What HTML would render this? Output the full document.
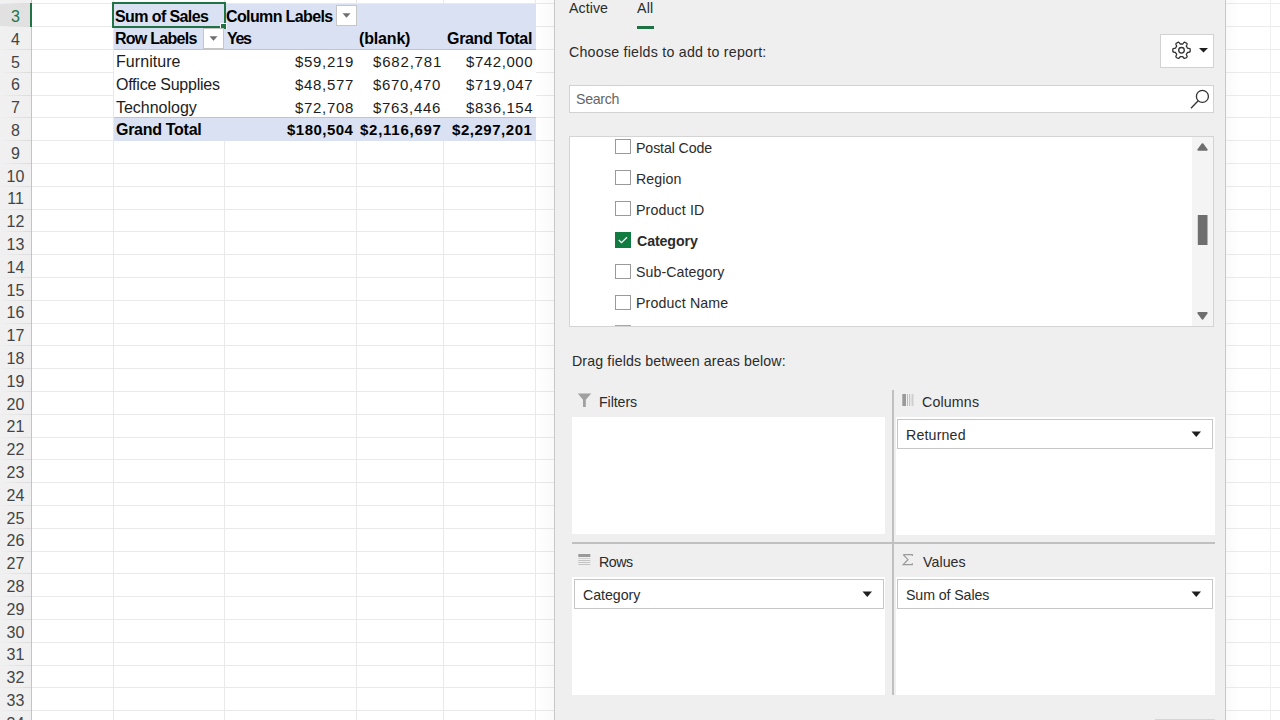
<!DOCTYPE html>
<html><head><meta charset="utf-8"><style>
html,body{margin:0;padding:0;width:1280px;height:720px;overflow:hidden;background:#fff;position:relative;font-family:"Liberation Sans", sans-serif}
.t{position:absolute;white-space:nowrap;line-height:normal}
.r{position:absolute}
</style></head><body>
<div class="r" style="left:0px;top:0px;width:31px;height:720px;background:#f0f0f0"></div>
<div class="r" style="left:0px;top:4px;width:31px;height:22px;background:#e1e1e1"></div>
<div class="r" style="left:0px;top:3px;width:31px;height:1px;background:linear-gradient(to right, rgba(0,0,0,0.0), rgba(0,0,0,0.09))"></div>
<div class="r" style="left:32px;top:3px;width:522px;height:1px;background:#e9e9e9"></div>
<div class="r" style="left:1226px;top:3px;width:54px;height:1px;background:#ececec"></div>
<div class="r" style="left:0px;top:26px;width:31px;height:1px;background:linear-gradient(to right, rgba(0,0,0,0.0), rgba(0,0,0,0.09))"></div>
<div class="r" style="left:32px;top:26px;width:522px;height:1px;background:#e9e9e9"></div>
<div class="r" style="left:1226px;top:26px;width:54px;height:1px;background:#ececec"></div>
<div class="r" style="left:0px;top:49px;width:31px;height:1px;background:linear-gradient(to right, rgba(0,0,0,0.0), rgba(0,0,0,0.09))"></div>
<div class="r" style="left:32px;top:49px;width:522px;height:1px;background:#e9e9e9"></div>
<div class="r" style="left:1226px;top:49px;width:54px;height:1px;background:#ececec"></div>
<div class="r" style="left:0px;top:72px;width:31px;height:1px;background:linear-gradient(to right, rgba(0,0,0,0.0), rgba(0,0,0,0.09))"></div>
<div class="r" style="left:32px;top:72px;width:522px;height:1px;background:#e9e9e9"></div>
<div class="r" style="left:1226px;top:72px;width:54px;height:1px;background:#ececec"></div>
<div class="r" style="left:0px;top:95px;width:31px;height:1px;background:linear-gradient(to right, rgba(0,0,0,0.0), rgba(0,0,0,0.09))"></div>
<div class="r" style="left:32px;top:95px;width:522px;height:1px;background:#e9e9e9"></div>
<div class="r" style="left:1226px;top:95px;width:54px;height:1px;background:#ececec"></div>
<div class="r" style="left:0px;top:117px;width:31px;height:1px;background:linear-gradient(to right, rgba(0,0,0,0.0), rgba(0,0,0,0.09))"></div>
<div class="r" style="left:32px;top:117px;width:522px;height:1px;background:#e9e9e9"></div>
<div class="r" style="left:1226px;top:117px;width:54px;height:1px;background:#ececec"></div>
<div class="r" style="left:0px;top:140px;width:31px;height:1px;background:linear-gradient(to right, rgba(0,0,0,0.0), rgba(0,0,0,0.09))"></div>
<div class="r" style="left:32px;top:140px;width:522px;height:1px;background:#e9e9e9"></div>
<div class="r" style="left:1226px;top:140px;width:54px;height:1px;background:#ececec"></div>
<div class="r" style="left:0px;top:163px;width:31px;height:1px;background:linear-gradient(to right, rgba(0,0,0,0.0), rgba(0,0,0,0.09))"></div>
<div class="r" style="left:32px;top:163px;width:522px;height:1px;background:#e9e9e9"></div>
<div class="r" style="left:1226px;top:163px;width:54px;height:1px;background:#ececec"></div>
<div class="r" style="left:0px;top:186px;width:31px;height:1px;background:linear-gradient(to right, rgba(0,0,0,0.0), rgba(0,0,0,0.09))"></div>
<div class="r" style="left:32px;top:186px;width:522px;height:1px;background:#e9e9e9"></div>
<div class="r" style="left:1226px;top:186px;width:54px;height:1px;background:#ececec"></div>
<div class="r" style="left:0px;top:209px;width:31px;height:1px;background:linear-gradient(to right, rgba(0,0,0,0.0), rgba(0,0,0,0.09))"></div>
<div class="r" style="left:32px;top:209px;width:522px;height:1px;background:#e9e9e9"></div>
<div class="r" style="left:1226px;top:209px;width:54px;height:1px;background:#ececec"></div>
<div class="r" style="left:0px;top:231px;width:31px;height:1px;background:linear-gradient(to right, rgba(0,0,0,0.0), rgba(0,0,0,0.09))"></div>
<div class="r" style="left:32px;top:231px;width:522px;height:1px;background:#e9e9e9"></div>
<div class="r" style="left:1226px;top:231px;width:54px;height:1px;background:#ececec"></div>
<div class="r" style="left:0px;top:254px;width:31px;height:1px;background:linear-gradient(to right, rgba(0,0,0,0.0), rgba(0,0,0,0.09))"></div>
<div class="r" style="left:32px;top:254px;width:522px;height:1px;background:#e9e9e9"></div>
<div class="r" style="left:1226px;top:254px;width:54px;height:1px;background:#ececec"></div>
<div class="r" style="left:0px;top:277px;width:31px;height:1px;background:linear-gradient(to right, rgba(0,0,0,0.0), rgba(0,0,0,0.09))"></div>
<div class="r" style="left:32px;top:277px;width:522px;height:1px;background:#e9e9e9"></div>
<div class="r" style="left:1226px;top:277px;width:54px;height:1px;background:#ececec"></div>
<div class="r" style="left:0px;top:300px;width:31px;height:1px;background:linear-gradient(to right, rgba(0,0,0,0.0), rgba(0,0,0,0.09))"></div>
<div class="r" style="left:32px;top:300px;width:522px;height:1px;background:#e9e9e9"></div>
<div class="r" style="left:1226px;top:300px;width:54px;height:1px;background:#ececec"></div>
<div class="r" style="left:0px;top:323px;width:31px;height:1px;background:linear-gradient(to right, rgba(0,0,0,0.0), rgba(0,0,0,0.09))"></div>
<div class="r" style="left:32px;top:323px;width:522px;height:1px;background:#e9e9e9"></div>
<div class="r" style="left:1226px;top:323px;width:54px;height:1px;background:#ececec"></div>
<div class="r" style="left:0px;top:345px;width:31px;height:1px;background:linear-gradient(to right, rgba(0,0,0,0.0), rgba(0,0,0,0.09))"></div>
<div class="r" style="left:32px;top:345px;width:522px;height:1px;background:#e9e9e9"></div>
<div class="r" style="left:1226px;top:345px;width:54px;height:1px;background:#ececec"></div>
<div class="r" style="left:0px;top:368px;width:31px;height:1px;background:linear-gradient(to right, rgba(0,0,0,0.0), rgba(0,0,0,0.09))"></div>
<div class="r" style="left:32px;top:368px;width:522px;height:1px;background:#e9e9e9"></div>
<div class="r" style="left:1226px;top:368px;width:54px;height:1px;background:#ececec"></div>
<div class="r" style="left:0px;top:391px;width:31px;height:1px;background:linear-gradient(to right, rgba(0,0,0,0.0), rgba(0,0,0,0.09))"></div>
<div class="r" style="left:32px;top:391px;width:522px;height:1px;background:#e9e9e9"></div>
<div class="r" style="left:1226px;top:391px;width:54px;height:1px;background:#ececec"></div>
<div class="r" style="left:0px;top:414px;width:31px;height:1px;background:linear-gradient(to right, rgba(0,0,0,0.0), rgba(0,0,0,0.09))"></div>
<div class="r" style="left:32px;top:414px;width:522px;height:1px;background:#e9e9e9"></div>
<div class="r" style="left:1226px;top:414px;width:54px;height:1px;background:#ececec"></div>
<div class="r" style="left:0px;top:437px;width:31px;height:1px;background:linear-gradient(to right, rgba(0,0,0,0.0), rgba(0,0,0,0.09))"></div>
<div class="r" style="left:32px;top:437px;width:522px;height:1px;background:#e9e9e9"></div>
<div class="r" style="left:1226px;top:437px;width:54px;height:1px;background:#ececec"></div>
<div class="r" style="left:0px;top:459px;width:31px;height:1px;background:linear-gradient(to right, rgba(0,0,0,0.0), rgba(0,0,0,0.09))"></div>
<div class="r" style="left:32px;top:459px;width:522px;height:1px;background:#e9e9e9"></div>
<div class="r" style="left:1226px;top:459px;width:54px;height:1px;background:#ececec"></div>
<div class="r" style="left:0px;top:482px;width:31px;height:1px;background:linear-gradient(to right, rgba(0,0,0,0.0), rgba(0,0,0,0.09))"></div>
<div class="r" style="left:32px;top:482px;width:522px;height:1px;background:#e9e9e9"></div>
<div class="r" style="left:1226px;top:482px;width:54px;height:1px;background:#ececec"></div>
<div class="r" style="left:0px;top:505px;width:31px;height:1px;background:linear-gradient(to right, rgba(0,0,0,0.0), rgba(0,0,0,0.09))"></div>
<div class="r" style="left:32px;top:505px;width:522px;height:1px;background:#e9e9e9"></div>
<div class="r" style="left:1226px;top:505px;width:54px;height:1px;background:#ececec"></div>
<div class="r" style="left:0px;top:528px;width:31px;height:1px;background:linear-gradient(to right, rgba(0,0,0,0.0), rgba(0,0,0,0.09))"></div>
<div class="r" style="left:32px;top:528px;width:522px;height:1px;background:#e9e9e9"></div>
<div class="r" style="left:1226px;top:528px;width:54px;height:1px;background:#ececec"></div>
<div class="r" style="left:0px;top:551px;width:31px;height:1px;background:linear-gradient(to right, rgba(0,0,0,0.0), rgba(0,0,0,0.09))"></div>
<div class="r" style="left:32px;top:551px;width:522px;height:1px;background:#e9e9e9"></div>
<div class="r" style="left:1226px;top:551px;width:54px;height:1px;background:#ececec"></div>
<div class="r" style="left:0px;top:573px;width:31px;height:1px;background:linear-gradient(to right, rgba(0,0,0,0.0), rgba(0,0,0,0.09))"></div>
<div class="r" style="left:32px;top:573px;width:522px;height:1px;background:#e9e9e9"></div>
<div class="r" style="left:1226px;top:573px;width:54px;height:1px;background:#ececec"></div>
<div class="r" style="left:0px;top:596px;width:31px;height:1px;background:linear-gradient(to right, rgba(0,0,0,0.0), rgba(0,0,0,0.09))"></div>
<div class="r" style="left:32px;top:596px;width:522px;height:1px;background:#e9e9e9"></div>
<div class="r" style="left:1226px;top:596px;width:54px;height:1px;background:#ececec"></div>
<div class="r" style="left:0px;top:619px;width:31px;height:1px;background:linear-gradient(to right, rgba(0,0,0,0.0), rgba(0,0,0,0.09))"></div>
<div class="r" style="left:32px;top:619px;width:522px;height:1px;background:#e9e9e9"></div>
<div class="r" style="left:1226px;top:619px;width:54px;height:1px;background:#ececec"></div>
<div class="r" style="left:0px;top:642px;width:31px;height:1px;background:linear-gradient(to right, rgba(0,0,0,0.0), rgba(0,0,0,0.09))"></div>
<div class="r" style="left:32px;top:642px;width:522px;height:1px;background:#e9e9e9"></div>
<div class="r" style="left:1226px;top:642px;width:54px;height:1px;background:#ececec"></div>
<div class="r" style="left:0px;top:665px;width:31px;height:1px;background:linear-gradient(to right, rgba(0,0,0,0.0), rgba(0,0,0,0.09))"></div>
<div class="r" style="left:32px;top:665px;width:522px;height:1px;background:#e9e9e9"></div>
<div class="r" style="left:1226px;top:665px;width:54px;height:1px;background:#ececec"></div>
<div class="r" style="left:0px;top:687px;width:31px;height:1px;background:linear-gradient(to right, rgba(0,0,0,0.0), rgba(0,0,0,0.09))"></div>
<div class="r" style="left:32px;top:687px;width:522px;height:1px;background:#e9e9e9"></div>
<div class="r" style="left:1226px;top:687px;width:54px;height:1px;background:#ececec"></div>
<div class="r" style="left:0px;top:710px;width:31px;height:1px;background:linear-gradient(to right, rgba(0,0,0,0.0), rgba(0,0,0,0.09))"></div>
<div class="r" style="left:32px;top:710px;width:522px;height:1px;background:#e9e9e9"></div>
<div class="r" style="left:1226px;top:710px;width:54px;height:1px;background:#ececec"></div>
<div class="r" style="left:113px;top:0px;width:1px;height:720px;background:#e9e9e9"></div>
<div class="r" style="left:224px;top:0px;width:1px;height:720px;background:#e9e9e9"></div>
<div class="r" style="left:356px;top:0px;width:1px;height:720px;background:#e9e9e9"></div>
<div class="r" style="left:443px;top:0px;width:1px;height:720px;background:#e9e9e9"></div>
<div class="r" style="left:535px;top:0px;width:1px;height:720px;background:#e9e9e9"></div>
<div class="r" style="left:1270px;top:0px;width:1px;height:720px;background:#f0f0f0"></div>
<div class="r" style="left:31px;top:0px;width:1px;height:720px;background:#c4c4c4"></div>
<div class="r" style="left:30px;top:3px;width:2px;height:24px;background:#217346"></div>
<div class="t" style="left:0;width:31px;text-align:center;top:8px;font-size:16px;color:#217346">3</div>
<div class="t" style="left:0;width:31px;text-align:center;top:31px;font-size:16px;color:#444">4</div>
<div class="t" style="left:0;width:31px;text-align:center;top:54px;font-size:16px;color:#444">5</div>
<div class="t" style="left:0;width:31px;text-align:center;top:76px;font-size:16px;color:#444">6</div>
<div class="t" style="left:0;width:31px;text-align:center;top:99px;font-size:16px;color:#444">7</div>
<div class="t" style="left:0;width:31px;text-align:center;top:122px;font-size:16px;color:#444">8</div>
<div class="t" style="left:0;width:31px;text-align:center;top:145px;font-size:16px;color:#444">9</div>
<div class="t" style="left:0;width:31px;text-align:center;top:168px;font-size:16px;color:#444">10</div>
<div class="t" style="left:0;width:31px;text-align:center;top:190px;font-size:16px;color:#444">11</div>
<div class="t" style="left:0;width:31px;text-align:center;top:213px;font-size:16px;color:#444">12</div>
<div class="t" style="left:0;width:31px;text-align:center;top:236px;font-size:16px;color:#444">13</div>
<div class="t" style="left:0;width:31px;text-align:center;top:259px;font-size:16px;color:#444">14</div>
<div class="t" style="left:0;width:31px;text-align:center;top:282px;font-size:16px;color:#444">15</div>
<div class="t" style="left:0;width:31px;text-align:center;top:304px;font-size:16px;color:#444">16</div>
<div class="t" style="left:0;width:31px;text-align:center;top:327px;font-size:16px;color:#444">17</div>
<div class="t" style="left:0;width:31px;text-align:center;top:350px;font-size:16px;color:#444">18</div>
<div class="t" style="left:0;width:31px;text-align:center;top:373px;font-size:16px;color:#444">19</div>
<div class="t" style="left:0;width:31px;text-align:center;top:396px;font-size:16px;color:#444">20</div>
<div class="t" style="left:0;width:31px;text-align:center;top:418px;font-size:16px;color:#444">21</div>
<div class="t" style="left:0;width:31px;text-align:center;top:441px;font-size:16px;color:#444">22</div>
<div class="t" style="left:0;width:31px;text-align:center;top:464px;font-size:16px;color:#444">23</div>
<div class="t" style="left:0;width:31px;text-align:center;top:487px;font-size:16px;color:#444">24</div>
<div class="t" style="left:0;width:31px;text-align:center;top:510px;font-size:16px;color:#444">25</div>
<div class="t" style="left:0;width:31px;text-align:center;top:532px;font-size:16px;color:#444">26</div>
<div class="t" style="left:0;width:31px;text-align:center;top:555px;font-size:16px;color:#444">27</div>
<div class="t" style="left:0;width:31px;text-align:center;top:578px;font-size:16px;color:#444">28</div>
<div class="t" style="left:0;width:31px;text-align:center;top:601px;font-size:16px;color:#444">29</div>
<div class="t" style="left:0;width:31px;text-align:center;top:624px;font-size:16px;color:#444">30</div>
<div class="t" style="left:0;width:31px;text-align:center;top:646px;font-size:16px;color:#444">31</div>
<div class="t" style="left:0;width:31px;text-align:center;top:669px;font-size:16px;color:#444">32</div>
<div class="t" style="left:0;width:31px;text-align:center;top:692px;font-size:16px;color:#444">33</div>
<div class="t" style="left:0;width:31px;text-align:center;top:715px;font-size:16px;color:#444">34</div>
<div class="r" style="left:114px;top:4px;width:422px;height:45px;background:#d9e1f2"></div>
<div class="r" style="left:114px;top:49px;width:422px;height:1px;background:#b4c6e7"></div>
<div class="r" style="left:114px;top:50px;width:422px;height:67px;background:#fff"></div>
<div class="r" style="left:114px;top:117px;width:422px;height:1px;background:#b4c6e7"></div>
<div class="r" style="left:114px;top:118px;width:422px;height:23px;background:#d9e1f2"></div>
<div id="c_sum" class="t" style="left:115.00px;top:8px;font-size:16px;font-weight:700;color:#000;letter-spacing:-0.600px">Sum of Sales</div>
<div id="c_collab" class="t" style="left:226.00px;top:8px;font-size:16px;font-weight:700;color:#000;letter-spacing:-0.625px">Column Labels</div>
<div id="c_rowlab" class="t" style="left:115.00px;top:30px;font-size:16px;font-weight:700;color:#000;letter-spacing:-0.733px">Row Labels</div>
<div id="c_yes" class="t" style="left:227.00px;top:30px;font-size:16px;font-weight:700;color:#000;letter-spacing:-1.300px">Yes</div>
<div id="c_blank" class="t" style="left:359.00px;top:30px;font-size:16px;font-weight:700;color:#000;letter-spacing:-0.167px">(blank)</div>
<div id="c_gt4" class="t" style="left:447.00px;top:30px;font-size:16px;font-weight:700;color:#000;letter-spacing:-0.320px">Grand Total</div>
<div id="c_furn" class="t" style="left:116.00px;top:53px;font-size:16px;font-weight:400;color:#1c1c1c;letter-spacing:0.062px">Furniture</div>
<div id="c_off" class="t" style="left:116.00px;top:76px;font-size:16px;font-weight:400;color:#1c1c1c;letter-spacing:-0.243px">Office Supplies</div>
<div id="c_tech" class="t" style="left:116.00px;top:99px;font-size:16px;font-weight:400;color:#1c1c1c;letter-spacing:-0.017px">Technology</div>
<div id="c_gt8" class="t" style="left:116.00px;top:121px;font-size:16px;font-weight:700;color:#000;letter-spacing:-0.290px">Grand Total</div>
<div id="n11" class="t" style="left:295.00px;top:53px;font-size:15px;font-weight:400;color:#1c1c1c;letter-spacing:0.683px">$59,219</div>
<div id="n12" class="t" style="left:373.00px;top:53px;font-size:15px;font-weight:400;color:#1c1c1c;letter-spacing:0.814px">$682,781</div>
<div id="n13" class="t" style="left:466.00px;top:53px;font-size:15px;font-weight:400;color:#1c1c1c;letter-spacing:0.571px">$742,000</div>
<div id="n21" class="t" style="left:295.00px;top:76px;font-size:15px;font-weight:400;color:#1c1c1c;letter-spacing:0.683px">$48,577</div>
<div id="n22" class="t" style="left:373.00px;top:76px;font-size:15px;font-weight:400;color:#1c1c1c;letter-spacing:0.671px">$670,470</div>
<div id="n23" class="t" style="left:466.00px;top:76px;font-size:15px;font-weight:400;color:#1c1c1c;letter-spacing:0.571px">$719,047</div>
<div id="n31" class="t" style="left:295.00px;top:99px;font-size:15px;font-weight:400;color:#1c1c1c;letter-spacing:0.683px">$72,708</div>
<div id="n32" class="t" style="left:373.00px;top:99px;font-size:15px;font-weight:400;color:#1c1c1c;letter-spacing:0.671px">$763,446</div>
<div id="n33" class="t" style="left:466.00px;top:99px;font-size:15px;font-weight:400;color:#1c1c1c;letter-spacing:0.571px">$836,154</div>
<div id="n41" class="t" style="left:287.00px;top:121px;font-size:15px;font-weight:700;color:#000;letter-spacing:0.486px">$180,504</div>
<div id="n42" class="t" style="left:360.00px;top:121px;font-size:15px;font-weight:700;color:#000;letter-spacing:0.744px">$2,116,697</div>
<div id="n43" class="t" style="left:452.00px;top:121px;font-size:15px;font-weight:700;color:#000;letter-spacing:0.533px">$2,297,201</div>
<div class="r" style="left:112px;top:2px;width:114px;height:26px;border:2px solid #217346;box-sizing:border-box"></div>
<div class="r" style="left:220px;top:23px;width:7px;height:6px;background:#217346;border:1px solid #fff;box-sizing:border-box"></div>
<div class="r" style="left:221px;top:24px;width:5px;height:5px;background:#217346"></div>
<div class="r" style="left:336px;top:5px;width:21px;height:21px;background:#fff;border:1px solid #c6c6c6;box-sizing:border-box"></div>
<svg class="r" style="left:336px;top:5px" width="21" height="21"><polygon points="6.5,8.3 14.5,8.3 10.5,12.8" fill="#6f6f6f"/></svg>
<div class="r" style="left:203px;top:28px;width:21px;height:21px;background:#fff;border:1px solid #c6c6c6;box-sizing:border-box"></div>
<svg class="r" style="left:203px;top:28px" width="21" height="21"><polygon points="6.5,8.3 14.5,8.3 10.5,12.8" fill="#6f6f6f"/></svg>
<div class="r" style="left:536px;top:0px;width:18px;height:720px;background:linear-gradient(to right, rgba(0,0,0,0), rgba(0,0,0,0.025))"></div>
<div class="r" style="left:1226px;top:0px;width:14px;height:720px;background:linear-gradient(to left, rgba(0,0,0,0), rgba(0,0,0,0.025))"></div>
<div class="r" style="left:554px;top:0px;width:672px;height:720px;background:#efefef;border-left:1px solid #c8c8c8;border-right:1px solid #c8c8c8;box-sizing:border-box"></div>
<div class="r" style="left:637px;top:26px;width:17px;height:3px;background:#1e7145"></div>
<div class="r" style="left:1160px;top:34px;width:54px;height:34px;background:#fff;border:1px solid #d2d2d2;box-sizing:border-box"></div>
<svg class="r" style="left:1168px;top:37px" width="28" height="28"><path d="M22.20 13.30 L22.19 13.76 L22.15 14.21 L22.09 14.66 L21.72 15.05 L20.74 15.24 L19.77 15.34 L19.38 15.56 L19.26 15.86 L19.11 16.16 L18.96 16.45 L18.78 16.73 L18.60 17.00 L18.40 17.26 L18.40 17.71 L18.80 18.60 L19.12 19.55 L18.98 20.06 L18.61 20.34 L18.24 20.60 L17.85 20.83 L17.45 21.05 L17.04 21.25 L16.62 21.42 L16.10 21.29 L15.44 20.54 L14.87 19.75 L14.49 19.52 L14.16 19.57 L13.83 19.59 L13.50 19.60 L13.17 19.59 L12.84 19.57 L12.51 19.52 L12.13 19.75 L11.56 20.54 L10.90 21.29 L10.38 21.42 L9.96 21.25 L9.55 21.05 L9.15 20.83 L8.76 20.60 L8.39 20.34 L8.02 20.06 L7.88 19.55 L8.20 18.60 L8.60 17.71 L8.60 17.26 L8.40 17.00 L8.22 16.73 L8.04 16.45 L7.89 16.16 L7.74 15.86 L7.62 15.56 L7.23 15.34 L6.26 15.24 L5.28 15.05 L4.91 14.66 L4.85 14.21 L4.81 13.76 L4.80 13.30 L4.81 12.84 L4.85 12.39 L4.91 11.94 L5.28 11.55 L6.26 11.36 L7.23 11.26 L7.62 11.04 L7.74 10.74 L7.89 10.44 L8.04 10.15 L8.22 9.87 L8.40 9.60 L8.60 9.34 L8.60 8.89 L8.20 8.00 L7.88 7.05 L8.02 6.54 L8.39 6.26 L8.76 6.00 L9.15 5.77 L9.55 5.55 L9.96 5.35 L10.38 5.18 L10.90 5.31 L11.56 6.06 L12.13 6.85 L12.51 7.08 L12.84 7.03 L13.17 7.01 L13.50 7.00 L13.83 7.01 L14.16 7.03 L14.49 7.08 L14.87 6.85 L15.44 6.06 L16.10 5.31 L16.62 5.18 L17.04 5.35 L17.45 5.55 L17.85 5.77 L18.24 6.00 L18.61 6.26 L18.98 6.54 L19.12 7.05 L18.80 8.00 L18.40 8.89 L18.40 9.34 L18.60 9.60 L18.78 9.87 L18.96 10.15 L19.11 10.44 L19.26 10.74 L19.38 11.04 L19.77 11.26 L20.74 11.36 L21.72 11.55 L22.09 11.94 L22.15 12.39 L22.19 12.84 L22.20 13.30 Z" fill="none" stroke="#333" stroke-width="1.3" stroke-linejoin="round"/><circle cx="13.5" cy="13.3" r="2.8" fill="none" stroke="#333" stroke-width="1.3"/></svg><svg class="r" style="left:1198px;top:47px" width="11" height="7"><polygon points="1,1 10,1 5.5,5.6" fill="#1f1f1f"/></svg>
<div class="r" style="left:569px;top:85px;width:645px;height:28px;background:#fff;border:1px solid #d2d2d2;box-sizing:border-box"></div>
<svg class="r" style="left:1186px;top:86px" width="26" height="26"><circle cx="16.4" cy="10.4" r="6" fill="none" stroke="#333" stroke-width="1.3"/><line x1="12.2" y1="14.8" x2="5" y2="22.2" stroke="#333" stroke-width="1.3"/></svg>
<div class="r" style="left:569px;top:136px;width:645px;height:191px;background:#fff;border:1px solid #d4d4d4;box-sizing:border-box"></div>
<div class="r" style="left:1192px;top:137px;width:21px;height:189px;background:#f4f4f4"></div>
<svg class="r" style="left:1192px;top:137px" width="21" height="189"><path d="M6.3 12.8 L10.5 7.2 L14.7 12.8 Z" fill="#6f6f6f" stroke="#6f6f6f" stroke-width="2" stroke-linejoin="round"/><rect x="5.8" y="78" width="9.7" height="30" fill="#6f6f6f"/><path d="M6.3 176 L10.5 181.6 L14.7 176 Z" fill="#6f6f6f" stroke="#6f6f6f" stroke-width="2" stroke-linejoin="round"/></svg>
<div class="r" style="left:615px;top:139px;width:16px;height:15px;background:#fff;border:1px solid #9a9a9a;box-sizing:border-box"></div>
<div class="r" style="left:615px;top:170px;width:16px;height:15px;background:#fff;border:1px solid #9a9a9a;box-sizing:border-box"></div>
<div class="r" style="left:615px;top:201px;width:16px;height:15px;background:#fff;border:1px solid #9a9a9a;box-sizing:border-box"></div>
<div class="r" style="left:615px;top:232px;width:16px;height:16px;background:#107c41"></div>
<svg class="r" style="left:615px;top:232px" width="16" height="16"><polyline points="3.8,8 6.5,10.7 12,5.2" fill="none" stroke="#fff" stroke-width="1.3"/></svg>
<div class="r" style="left:615px;top:264px;width:16px;height:15px;background:#fff;border:1px solid #9a9a9a;box-sizing:border-box"></div>
<div class="r" style="left:615px;top:295px;width:16px;height:15px;background:#fff;border:1px solid #9a9a9a;box-sizing:border-box"></div>
<div class="r" style="left:615px;top:325px;width:16px;height:1px;background:#7fbf9d"></div>
<div class="r" style="left:892px;top:390px;width:2px;height:305px;background:#c0c0c0"></div>
<div class="r" style="left:572px;top:542px;width:643px;height:2px;background:#c0c0c0"></div>
<div class="r" style="left:572px;top:417px;width:313px;height:117px;background:#fff"></div>
<div class="r" style="left:896px;top:417px;width:319px;height:118px;background:#fff"></div>
<div class="r" style="left:572px;top:577px;width:313px;height:118px;background:#fff"></div>
<div class="r" style="left:896px;top:577px;width:319px;height:118px;background:#fff"></div>
<svg class="r" style="left:577px;top:393px" width="15" height="15"><path d="M0.8 0.5 H14.2 L8.8 6.7 V14 H6 V6.7 Z" fill="#a0a0a0"/></svg>
<svg class="r" style="left:902px;top:394px" width="13" height="12"><rect x="0.3" y="0" width="3.7" height="12" fill="#9a9a9a"/><rect x="5" y="0" width="1" height="12" fill="#bdbdbd"/><rect x="7.2" y="0" width="1" height="12" fill="#bdbdbd"/><rect x="9.5" y="0" width="2" height="12" fill="#cfcfcf"/></svg>
<svg class="r" style="left:578px;top:554px" width="13" height="12"><rect x="0.3" y="0" width="12" height="3" fill="#9a9a9a"/><rect x="0.3" y="4" width="12" height="1" fill="#d0d0d0"/><rect x="0.3" y="6" width="12" height="1" fill="#c4c4c4"/><rect x="0.3" y="8" width="12" height="1" fill="#c4c4c4"/><rect x="0.3" y="10" width="12" height="1" fill="#c4c4c4"/></svg>
<svg class="r" style="left:902px;top:553px" width="12" height="13"><path d="M1.2 1.6 H10.3 V3 M1.2 1.6 L6 6.7 L1.2 11.6 H10.3 V10.2" fill="none" stroke="#9a9a9a" stroke-width="1.2"/></svg>
<div class="r" style="left:897px;top:419px;width:316px;height:30px;background:#fff;border:1px solid #c6c6c6;box-sizing:border-box"></div>
<svg class="r" style="left:1191px;top:431px" width="11" height="7"><polygon points="0.5,0.5 10,0.5 5.25,6" fill="#1f1f1f"/></svg>
<div class="r" style="left:574px;top:579px;width:310px;height:30px;background:#fff;border:1px solid #c6c6c6;box-sizing:border-box"></div>
<svg class="r" style="left:862px;top:591px" width="11" height="7"><polygon points="0.5,0.5 10,0.5 5.25,6" fill="#1f1f1f"/></svg>
<div class="r" style="left:897px;top:579px;width:316px;height:30px;background:#fff;border:1px solid #c6c6c6;box-sizing:border-box"></div>
<svg class="r" style="left:1191px;top:591px" width="11" height="7"><polygon points="0.5,0.5 10,0.5 5.25,6" fill="#1f1f1f"/></svg>
<div class="r" style="left:1155px;top:719px;width:60px;height:1px;background:#d6d6d6"></div>
<div id="p_active" class="t" style="left:569.00px;top:0px;font-size:14.2px;font-weight:400;color:#2b2b2b;letter-spacing:0.060px">Active</div>
<div id="p_all" class="t" style="left:637.00px;top:0px;font-size:14.2px;font-weight:400;color:#2b2b2b;letter-spacing:0.200px">All</div>
<div id="p_choose" class="t" style="left:569.00px;top:44px;font-size:14.2px;font-weight:400;color:#2b2b2b;letter-spacing:0.240px">Choose fields to add to report:</div>
<div id="p_search" class="t" style="left:576.00px;top:91px;font-size:14.2px;font-weight:400;color:#666;letter-spacing:-0.320px">Search</div>
<div id="p_f0" class="t" style="left:636.00px;top:140px;font-size:14.2px;font-weight:400;color:#2b2b2b;letter-spacing:-0.110px">Postal Code</div>
<div id="p_f1" class="t" style="left:636.00px;top:171px;font-size:14.2px;font-weight:400;color:#2b2b2b;letter-spacing:0.100px">Region</div>
<div id="p_f2" class="t" style="left:636.00px;top:202px;font-size:14.2px;font-weight:400;color:#2b2b2b;letter-spacing:0.133px">Product ID</div>
<div id="p_f3" class="t" style="left:637.00px;top:233px;font-size:14.2px;font-weight:700;color:#2b2b2b;letter-spacing:-0.100px">Category</div>
<div id="p_f4" class="t" style="left:636.00px;top:264px;font-size:14.2px;font-weight:400;color:#2b2b2b;letter-spacing:0.073px">Sub-Category</div>
<div id="p_f5" class="t" style="left:636.00px;top:295px;font-size:14.2px;font-weight:400;color:#2b2b2b;letter-spacing:0.136px">Product Name</div>
<div id="p_drag" class="t" style="left:572.00px;top:353px;font-size:14.2px;font-weight:400;color:#2b2b2b;letter-spacing:0.126px">Drag fields between areas below:</div>
<div id="p_filters" class="t" style="left:599.00px;top:394px;font-size:14.2px;font-weight:400;color:#2b2b2b;letter-spacing:-0.083px">Filters</div>
<div id="p_columns" class="t" style="left:922.00px;top:394px;font-size:14.2px;font-weight:400;color:#2b2b2b;letter-spacing:0.167px">Columns</div>
<div id="p_returned" class="t" style="left:906.00px;top:427px;font-size:14.2px;font-weight:400;color:#2b2b2b;letter-spacing:0.171px">Returned</div>
<div id="p_rows" class="t" style="left:599.00px;top:554px;font-size:14.2px;font-weight:400;color:#2b2b2b;letter-spacing:-0.467px">Rows</div>
<div id="p_values" class="t" style="left:923.00px;top:554px;font-size:14.2px;font-weight:400;color:#2b2b2b;letter-spacing:0.060px">Values</div>
<div id="p_cat" class="t" style="left:583.00px;top:587px;font-size:14.2px;font-weight:400;color:#2b2b2b;letter-spacing:-0.029px">Category</div>
<div id="p_sos" class="t" style="left:906.00px;top:587px;font-size:14.2px;font-weight:400;color:#2b2b2b;letter-spacing:-0.091px">Sum of Sales</div>
</body></html>
